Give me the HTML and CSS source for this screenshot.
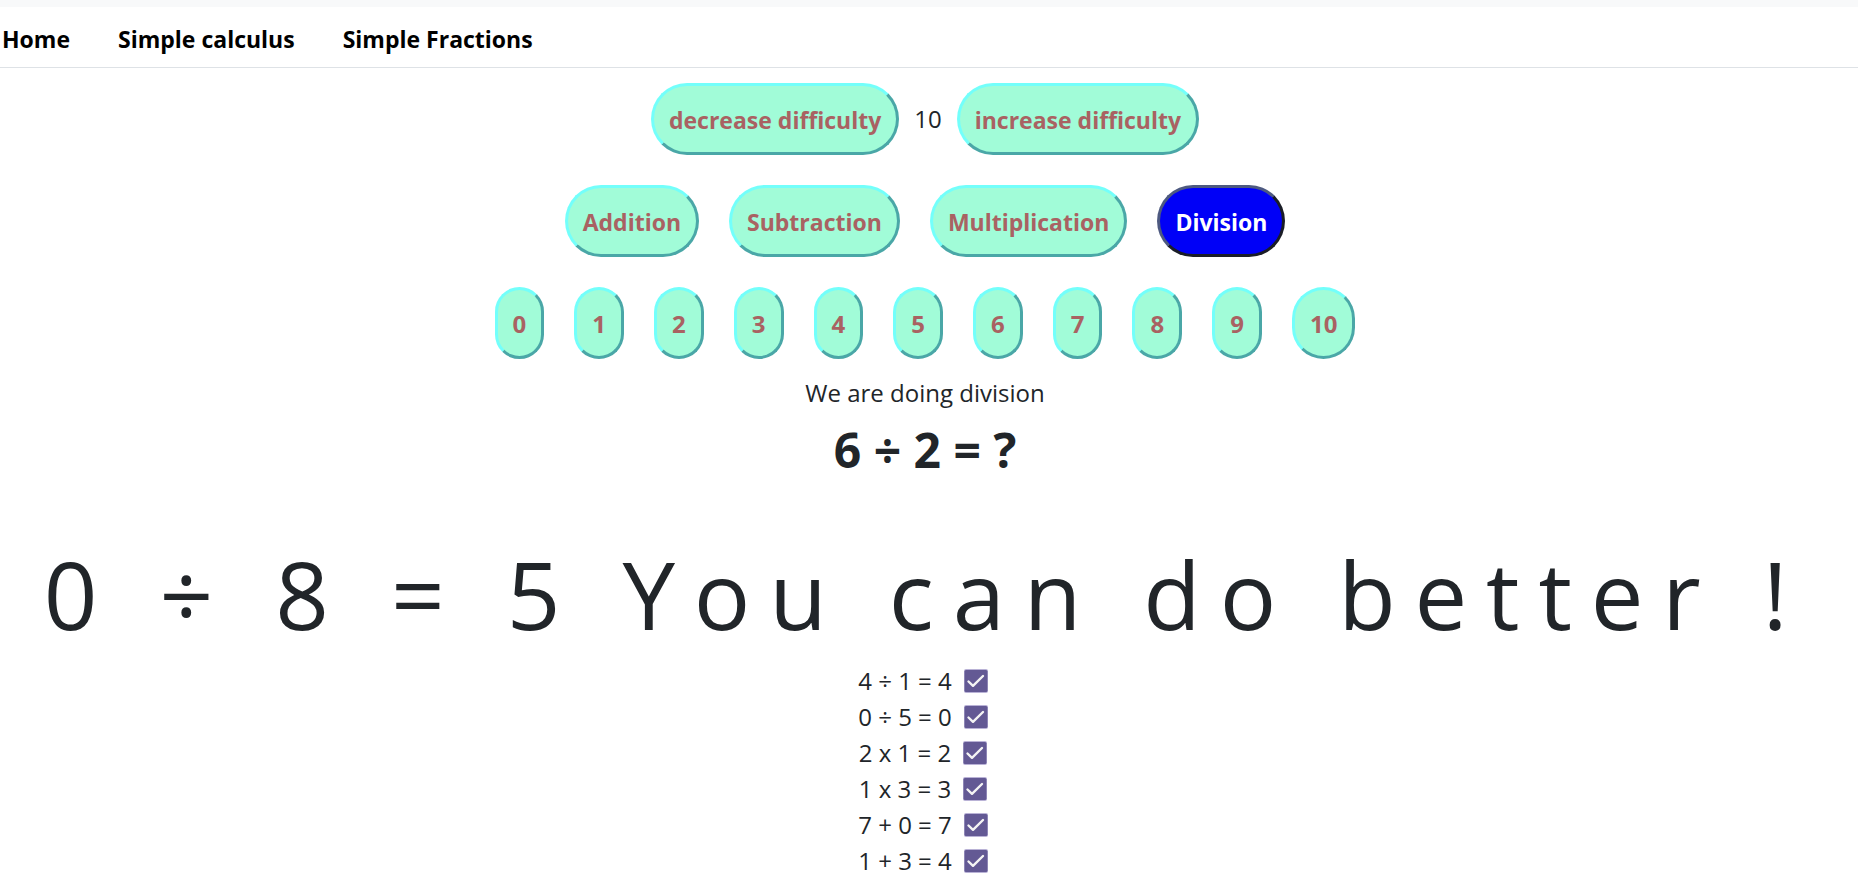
FILE: index.html
```
<!DOCTYPE html>
<html lang="en">
<head>
<meta charset="utf-8">
<meta name="viewport" content="width=device-width, initial-scale=1">
<title>Simple calculus</title>
<link rel="stylesheet" href="styles.css">
</head>
<body>
<svg class="sprite" aria-hidden="true">
  <symbol id="check" viewBox="0 0 24 24">
    <rect class="check-edge" width="24" height="24" rx="2"/>
    <rect class="check-fill" x=".5" y="1" width="23" height="22" rx="1.5"/>
    <path class="check-mark" d="M4.5 12.5 9 16.8 19 7"/>
  </symbol>
</svg>
<nav class="nav">
  <a class="nav-link" href="#home">Home</a>
  <a class="nav-link" href="#calculus">Simple calculus</a>
  <a class="nav-link" href="#fractions">Simple Fractions</a>
</nav>
<main class="game">
  <div class="row">
    <button class="btn" type="button">decrease difficulty</button>
    <span class="level">10</span>
    <button class="btn" type="button">increase difficulty</button>
  </div>
  <div class="row">
    <button class="btn" type="button">Addition</button>
    <button class="btn" type="button">Subtraction</button>
    <button class="btn" type="button">Multiplication</button>
    <button class="btn btn-active" type="button">Division</button>
  </div>
  <div class="row">
    <button class="btn btn-digit" type="button">0</button>
    <button class="btn btn-digit" type="button">1</button>
    <button class="btn btn-digit" type="button">2</button>
    <button class="btn btn-digit" type="button">3</button>
    <button class="btn btn-digit" type="button">4</button>
    <button class="btn btn-digit" type="button">5</button>
    <button class="btn btn-digit" type="button">6</button>
    <button class="btn btn-digit" type="button">7</button>
    <button class="btn btn-digit" type="button">8</button>
    <button class="btn btn-digit" type="button">9</button>
    <button class="btn btn-digit" type="button">10</button>
  </div>
  <p class="mode">We are doing division</p>
  <h1 class="question">6 ÷ 2 = ?</h1>
  <p class="feedback">0 ÷ 8 = 5 You can do better !</p>
  <ul class="history">
    <li class="result">4 ÷ 1 = 4 <svg class="check" role="img" aria-label="correct"><use href="#check"/></svg></li>
    <li class="result">0 ÷ 5 = 0 <svg class="check" role="img" aria-label="correct"><use href="#check"/></svg></li>
    <li class="result">2 x 1 = 2 <svg class="check" role="img" aria-label="correct"><use href="#check"/></svg></li>
    <li class="result">1 x 3 = 3 <svg class="check" role="img" aria-label="correct"><use href="#check"/></svg></li>
    <li class="result">7 + 0 = 7 <svg class="check" role="img" aria-label="correct"><use href="#check"/></svg></li>
    <li class="result">1 + 3 = 4 <svg class="check" role="img" aria-label="correct"><use href="#check"/></svg></li>
  </ul>
</main>
</body>
</html>
```
FILE: styles.css
```
* {
  box-sizing: border-box;
}

body {
  margin: 0;
  border-top: 7px solid #f8f9fa;
  background: #fff;
  color: #212529;
  font: 24px/36px "Segoe UI", "Open Sans", "Noto Sans", sans-serif;
}

.sprite {
  display: none;
}

.nav {
  display: flex;
  gap: 48px;
  padding: 14px 2px 10px;
  border-bottom: 1px solid #dee2e6;
}

.nav-link {
  color: #000;
  font-size: 23px;
  font-weight: 700;
  text-decoration: none;
}

.game {
  padding-right: 8px;
  text-align: center;
}

.row {
  display: flex;
  flex-wrap: wrap;
  justify-content: center;
  align-items: center;
}

.btn {
  margin: 15px;
  padding: 16px 15px 14px;
  border: 3px solid;
  border-color: #73fffb #4aa7a7 #4aa7a7 #73fffb;
  border-radius: 50px;
  background: #a1fcd8;
  color: #a96262;
  font: inherit;
  font-size: 23px;
  font-weight: 700;
}

.btn-digit {
  font-size: 24px;
}

.btn-active {
  border-color: #4d5980 #1a1d27 #1a1d27 #4d5980;
  background: #0000f7;
  color: #fff;
}

.mode {
  margin: 0;
  padding-top: 1px;
}

.question {
  margin: 0 0 40px;
  padding-top: 3px;
  font-size: 48px;
  line-height: 72px;
}

.feedback {
  margin: 0;
  font-size: 94px;
  line-height: 136px;
  letter-spacing: 0.2em;
}

.history {
  margin: 0;
  padding: 1px 0 0;
  list-style: none;
}

.result {
  display: flex;
  justify-content: center;
  align-items: center;
  gap: 12px;
  padding-right: 4px;
}

.check {
  width: 24px;
  height: 24px;
}

.check-edge {
  fill: #b9b2d6;
}

.check-fill {
  fill: #635994;
}

.check-mark {
  fill: none;
  stroke: #f4f4f4;
  stroke-width: 2.4;
  stroke-linecap: round;
  stroke-linejoin: round;
}
```
